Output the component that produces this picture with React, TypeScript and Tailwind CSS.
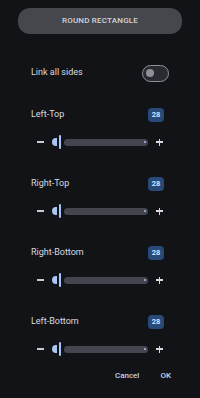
import React from 'react';

const sides = ['Left-Top', 'Right-Top', 'Right-Bottom', 'Left-Bottom'];

const Slider: React.FC = () => (
  <div className="flex items-center h-[14px] pl-[37px] pr-[37px]">
    <div className="w-[7px] h-[1.5px] bg-[#c9cbd0]" />
    <div className="ml-[8px] w-[5px] h-[8px] rounded-l-full bg-[#a9c5f5]" />
    <div className="ml-[2px] w-[2px] h-[14px] rounded-full bg-[#a9c5f5]" />
    <div className="ml-[3px] flex-1 h-[7px] rounded-full bg-[#43464f] flex items-center justify-end pr-[2px]">
      <div className="w-[2px] h-[2px] rounded-full bg-[#a9c5f5]" />
    </div>
    <div className="ml-[8px] relative w-[7px] h-[7px]">
      <div className="absolute left-0 top-[2.75px] w-[7px] h-[1.5px] bg-[#d7d9de]" />
      <div className="absolute top-0 left-[2.75px] w-[1.5px] h-[7px] bg-[#d7d9de]" />
    </div>
  </div>
);

const App: React.FC = () => {
  return (
    <div
      className="w-[200px] h-[398px] bg-[#121317] overflow-hidden pt-[8px] text-[#dadbe0]"
      style={{ fontFamily: 'Roboto, "Noto Sans", sans-serif' }}
    >
      {/* Header */}
      <div className="mx-[18px] h-[26px] rounded-[12px] bg-[#46474d] flex items-center justify-center">
        <span className="text-[8px] font-medium tracking-[0.2px] text-[#d3d4d9]">ROUND RECTANGLE</span>
      </div>

      {/* Link toggle */}
      <div className="mt-[30px] h-[18px] flex items-center justify-between pl-[31px] pr-[31px]">
        <span className="text-[9px]">Link all sides</span>
        <div className="w-[27px] h-[17px] rounded-full border-[1.5px] border-[#8e9099] bg-[#2a2b31] flex items-center pl-[3px]">
          <div className="w-[8px] h-[8px] rounded-full bg-[#8e9099]" />
        </div>
      </div>

      {sides.map((s, i) => (
        <div key={s} className={i === 0 ? 'mt-[26px]' : 'mt-[28px]'}>
          <div className="h-[14px] flex items-center justify-between pl-[31px] pr-[36px]">
            <span className="text-[9px]">{s}</span>
            <div className="w-[16px] h-[14px] rounded-[4px] bg-[#284a78] flex items-center justify-center">
              <span className="text-[7.5px] font-bold text-[#d6e3ff]">28</span>
            </div>
          </div>
          <div className="mt-[13px]">
            <Slider />
          </div>
        </div>
      ))}

      {/* Actions */}
      <div className="mt-[13px] h-[14px] flex items-center justify-end pr-[29px] gap-[21px]">
        <span className="text-[8px] font-medium text-[#c9d2e2]">Cancel</span>
        <span className="text-[8px] font-medium text-[#c9d2e2]">OK</span>
      </div>
    </div>
  );
};

export default App;
